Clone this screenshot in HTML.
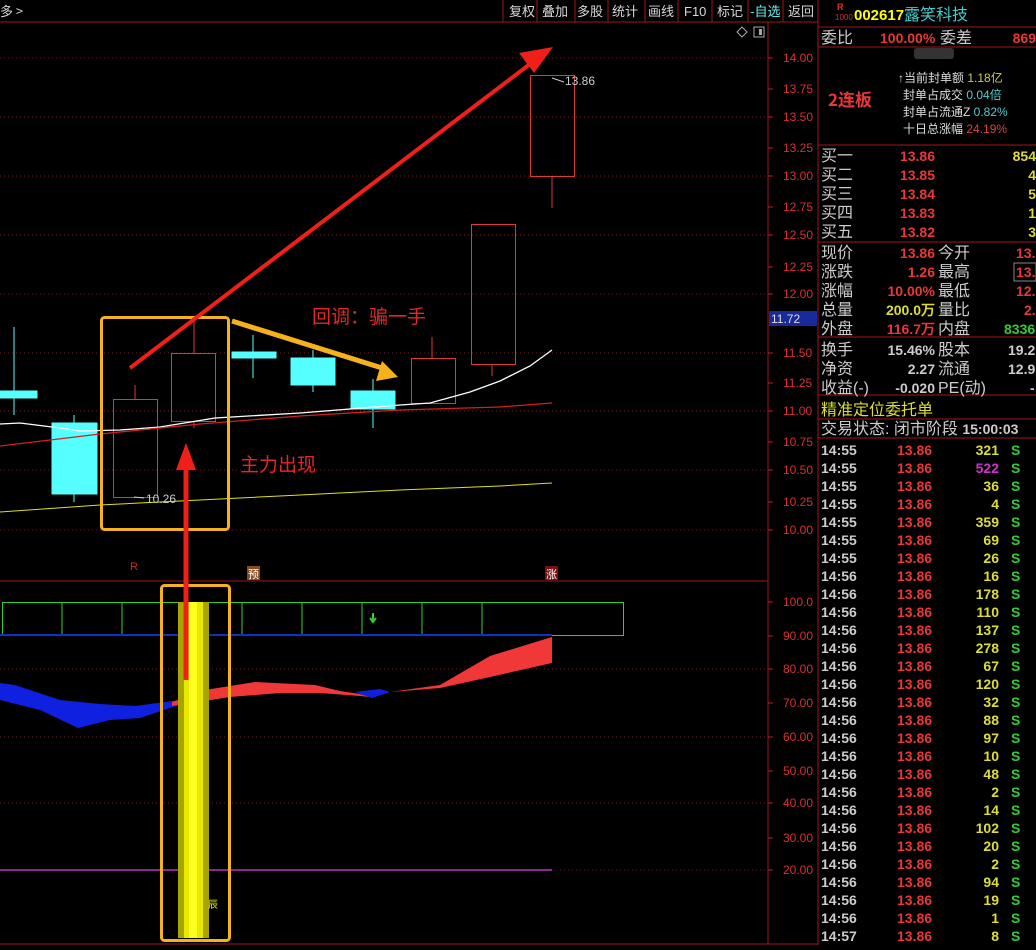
<!DOCTYPE html><html><head><meta charset="utf-8"><style>
body{margin:0;background:#000;width:1036px;height:945px;overflow:hidden}
svg text{font-family:"Liberation Sans","WenQuanYi Zen Hei",sans-serif}
.cn{font-family:"WenQuanYi Zen Hei","Noto Sans CJK SC",sans-serif}
</style></head><body>
<svg width="1036" height="945" viewBox="0 0 1036 945" xmlns="http://www.w3.org/2000/svg">
<rect width="1036" height="945" fill="#000"/>
<g fill="none" stroke="#a01818"><line x1="0" y1="22" x2="818" y2="22"/><line x1="768" y1="22" x2="768" y2="944"/><line x1="818" y1="0" x2="818" y2="945"/><line x1="0" y1="581" x2="768" y2="581"/><line x1="0" y1="944" x2="818" y2="944"/>
<path d="M503 0V22M537 0V22M575 0V22M608 0V22M645 0V22M678 0V22M712 0V22M748 0V22M783 0V22"/></g>
<g font-size="13" fill="#d8d8d8" class="cn"><text x="0" y="16" class="cn">多 &gt;</text>
<text x="509" y="16" class="cn">复权</text><text x="542" y="16" class="cn">叠加</text><text x="577" y="16" class="cn">多股</text><text x="612" y="16" class="cn">统计</text><text x="648" y="16" class="cn">画线</text><text x="684" y="16">F10</text><text x="717" y="16" class="cn">标记</text><text x="750" y="16" class="cn" fill="#6ee">-自选</text><text x="788" y="16" class="cn">返回</text></g>
<path d="M742 27l5 5-5 5-5-5z" fill="none" stroke="#aaa"/><rect x="754" y="27" width="10" height="10" fill="none" stroke="#aaa"/><rect x="759" y="29" width="3" height="6" fill="#aaa"/>
<g stroke="#7a1a1a" stroke-dasharray="1 3"><path d="M0 58H768M0 117H768M0 176H768M0 235H768M0 294H768M0 353H768M0 411H768M0 470H768M0 530H768M0 669H768M0 737H768M0 803H768M560 870H768"/></g>
<g font-size="12" fill="#d83030"><g stroke="#c02020"><path d="M768 58h5M768 89h5M768 117h5M768 148h5M768 176h5M768 207h5M768 235h5M768 267h5M768 294h5M768 353h5M768 383h5M768 411h5M768 442h5M768 470h5M768 502h5M768 530h5M768 602h5M768 636h5M768 669h5M768 703h5M768 737h5M768 771h5M768 803h5M768 838h5M768 870h5"/></g>
<text x="783" y="62">14.00</text><text x="783" y="93">13.75</text><text x="783" y="121">13.50</text><text x="783" y="152">13.25</text><text x="783" y="180">13.00</text><text x="783" y="211">12.75</text><text x="783" y="239">12.50</text><text x="783" y="271">12.25</text><text x="783" y="298">12.00</text><text x="783" y="357">11.50</text><text x="783" y="387">11.25</text><text x="783" y="415">11.00</text><text x="783" y="446">10.75</text><text x="783" y="474">10.50</text><text x="783" y="506">10.25</text><text x="783" y="534">10.00</text>
<text x="783" y="606">100.0</text><text x="783" y="640">90.00</text><text x="783" y="673">80.00</text><text x="783" y="707">70.00</text><text x="783" y="741">60.00</text><text x="783" y="775">50.00</text><text x="783" y="807">40.00</text><text x="783" y="842">30.00</text><text x="783" y="874">20.00</text></g>
<rect x="769" y="311" width="48" height="15" fill="#1a2a9a"/><text x="771" y="323" font-size="12" fill="#ddd">11.72</text>
<g stroke="#5ff" fill="#5ff"><path d="M14 327V415M74 415V502M253 335V378M313 350V392M373 379V428" fill="none"/>
<rect x="0" y="391" width="37" height="7"/><rect x="52" y="423" width="45" height="71"/><rect x="232" y="352" width="44" height="6"/><rect x="291" y="358" width="44" height="27"/><rect x="351" y="391" width="44" height="18"/></g>
<g stroke="#e03838" fill="none"><path d="M135 385V399M194 320V353M194 421V428M432 337V358M492 364V376M552 176V208"/>
<rect x="113.5" y="399.5" width="44" height="98"/><rect x="171.5" y="353.5" width="44" height="68"/><rect x="411.5" y="358.5" width="44" height="45"/><rect x="471.5" y="224.5" width="44" height="140"/><rect x="530.5" y="75.5" width="44" height="101"/></g>
<text x="565" y="85" font-size="12" fill="#ccc">13.86</text><path d="M552 78l12 4" stroke="#ccc"/>
<text x="146" y="503" font-size="12" fill="#ccc">10.26</text><path d="M134 497l10 1" stroke="#ccc"/>
<polyline fill="none" stroke="#fff" stroke-width="1.3" points="0,424 20,423 60,428 80,431 120,430 160,427 215,418 300,413 400,405 430,403 470,392 500,381 530,366 552,350"/>
<polyline fill="none" stroke="#d02020" stroke-width="1.3" points="0,446 100,434 200,424 300,416 400,410 500,407 552,403"/>
<polyline fill="none" stroke="#e0e020" points="0,512 100,505 200,500 300,495 400,490 500,486 552,483"/>
<rect x="101.5" y="317.5" width="127" height="212" rx="3" fill="none" stroke="#f5b21c" stroke-width="3"/>
<line x1="130" y1="368" x2="530" y2="64" stroke="#f02018" stroke-width="4"/><path d="M553 47l-34 6 15 20z" fill="#f02018"/>
<line x1="232" y1="321" x2="382" y2="368" stroke="#f5b21c" stroke-width="5"/><path d="M398 377l-22 4 6-20z" fill="#f5b21c"/>
<text x="312" y="323" font-size="19" fill="#e02828" class="cn">回调：骗一手</text>
<text x="240" y="471" font-size="19" fill="#e02828" class="cn">主力出现</text>
<text x="130" y="570" font-size="11" fill="#e02020">R</text>
<rect x="247" y="566" width="13" height="14" fill="#8a4a20"/><text x="248" y="578" font-size="11" fill="#fff" class="cn">预</text>
<rect x="545" y="566" width="13" height="14" fill="#7a1010"/><text x="546" y="578" font-size="11" fill="#fff" class="cn">涨</text>
<g stroke="#30d030" fill="none"><rect x="2.5" y="602.5" width="621" height="33"/><path d="M62 602V635M122 602V635M242 602V635M302 602V635M362 602V635M422 602V635M482 602V635"/></g>
<path d="M373 613v8m-3-3l3 4 3-4" stroke="#30d030" fill="none" stroke-width="2"/>
<line x1="0" y1="635" x2="552" y2="635" stroke="#1030c0" stroke-width="2"/>
<polygon points="0,683 15,685 60,700 100,704 135,706 180,700 185,703 140,718 110,720 78,728 40,710 0,700" fill="#1020e0"/>
<polygon points="172,702 205,690 255,682 315,685 340,691 360,694 370,697 360,696 320,693 280,693 230,697 172,706" fill="#f03838"/>
<polygon points="355,692 372,698 390,692 380,689" fill="#1020e0"/>
<polygon points="390,692 440,685 490,656 552,637 552,663 490,677 440,688" fill="#f03838"/>
<line x1="0" y1="870" x2="552" y2="870" stroke="#c030c0" stroke-width="1.5"/>
<rect x="178" y="602" width="31" height="336" fill="#a8a400"/><rect x="184" y="602" width="19" height="336" fill="#e8e800"/><rect x="189" y="602" width="8" height="336" fill="#ffff20"/>
<text x="208" y="908" font-size="10" fill="#ee0" class="cn">辰</text>
<rect x="161.5" y="585.5" width="68" height="355" rx="3" fill="none" stroke="#f5b21c" stroke-width="3"/>
<line x1="186" y1="680" x2="186" y2="465" stroke="#f02018" stroke-width="5"/><path d="M186 443l-10 27h20z" fill="#f02018"/>
<g stroke="#a01818"><path d="M818 27H1036M818 47H1036M818 145H1036M818 242H1036M818 337H1036M818 395H1036M818 419H1036M818 438H1036"/></g>
<text x="837" y="10" font-size="9" fill="#e03030" font-weight="bold">R</text><text x="835" y="20" font-size="8" fill="#d03030">1000</text>
<text x="854" y="20" font-size="15" font-weight="bold" fill="#ff0">002617</text><text x="904" y="20" font-size="16" fill="#4cc" class="cn">露笑科技</text>
<g font-size="16" fill="#ccc" class="cn"><text x="821" y="43">委比</text><text x="940" y="43">委差</text>
<text x="821" y="161">买一</text><text x="821" y="180">买二</text><text x="821" y="199">买三</text><text x="821" y="218">买四</text><text x="821" y="237">买五</text>
<text x="821" y="258">现价</text><text x="938" y="258">今开</text><text x="821" y="277">涨跌</text><text x="938" y="277">最高</text><text x="821" y="296">涨幅</text><text x="938" y="296">最低</text><text x="821" y="315">总量</text><text x="938" y="315">量比</text><text x="821" y="334">外盘</text><text x="938" y="334">内盘</text>
<text x="821" y="355">换手</text><text x="938" y="355">股本</text><text x="821" y="374">净资</text><text x="938" y="374">流通</text><text x="821" y="393">收益(-)</text><text x="938" y="393">PE(动)</text>
<text x="821" y="415" fill="#dd3">精准定位委托单</text><text x="821" y="434">交易状态: 闭市阶段 <tspan font-family="Liberation Sans" font-weight="bold" font-size="14">15:00:03</tspan></text></g>
<g font-size="14" font-weight="bold" fill="#e83838"><text x="880" y="43">100.00%</text><text x="1036" y="43" text-anchor="end">869</text>
<text x="935" y="161" text-anchor="end">13.86</text><text x="935" y="180" text-anchor="end">13.85</text><text x="935" y="199" text-anchor="end">13.84</text><text x="935" y="218" text-anchor="end">13.83</text><text x="935" y="237" text-anchor="end">13.82</text>
<g fill="#dd3" text-anchor="end"><text x="1036" y="161">854</text><text x="1036" y="180">4</text><text x="1036" y="199">5</text><text x="1036" y="218">1</text><text x="1036" y="237">3</text></g>
<g text-anchor="end"><text x="935" y="258">13.86</text><text x="935" y="277">1.26</text><text x="935" y="296">10.00%</text><text x="935" y="315" fill="#dd3">200.0万</text><text x="935" y="334">116.7万</text>
<text x="935" y="355" fill="#ccc">15.46%</text><text x="935" y="374" fill="#ccc">2.27</text><text x="935" y="393" fill="#ccc">-0.020</text></g>
<text x="1016" y="258">13.</text><text x="1016" y="277">13.</text><text x="1016" y="296">12.</text><text x="1024" y="315">2.</text><text x="1004" y="334" fill="#3c3">8336</text>
<text x="1008" y="355" fill="#ccc">19.2</text><text x="1008" y="374" fill="#ccc">12.9</text><text x="1030" y="393" fill="#ccc">-</text></g>
<rect x="1014" y="263" width="22" height="18" fill="none" stroke="#888"/>
<text x="828" y="106" font-size="17" font-weight="bold" fill="#e83838" class="cn">2连板</text>
<g font-size="12" class="cn" fill="#ddd"><text x="898" y="82">↑当前封单额 <tspan fill="#cc5">1.18亿</tspan></text><text x="903" y="99">封单占成交 <tspan fill="#5cc">0.04倍</tspan></text><text x="903" y="116">封单占流通Z <tspan fill="#5cc">0.82%</tspan></text><text x="903" y="133">十日总涨幅 <tspan fill="#d44">24.19%</tspan></text></g>
<rect x="914" y="48" width="40" height="11" rx="3" fill="#333"/>
<g font-size="14" font-weight="bold" fill="#ccc">
<text x="821" y="455">14:55</text><text x="821" y="473">14:55</text><text x="821" y="491">14:55</text><text x="821" y="509">14:55</text><text x="821" y="527">14:55</text><text x="821" y="545">14:55</text><text x="821" y="563">14:55</text><text x="821" y="581">14:56</text><text x="821" y="599">14:56</text><text x="821" y="617">14:56</text><text x="821" y="635">14:56</text><text x="821" y="653">14:56</text><text x="821" y="671">14:56</text><text x="821" y="689">14:56</text><text x="821" y="707">14:56</text><text x="821" y="725">14:56</text><text x="821" y="743">14:56</text><text x="821" y="761">14:56</text><text x="821" y="779">14:56</text><text x="821" y="797">14:56</text><text x="821" y="815">14:56</text><text x="821" y="833">14:56</text><text x="821" y="851">14:56</text><text x="821" y="869">14:56</text><text x="821" y="887">14:56</text><text x="821" y="905">14:56</text><text x="821" y="923">14:56</text><text x="821" y="941">14:57</text>
<g fill="#e83838"><text x="897" y="455">13.86</text><text x="897" y="473">13.86</text><text x="897" y="491">13.86</text><text x="897" y="509">13.86</text><text x="897" y="527">13.86</text><text x="897" y="545">13.86</text><text x="897" y="563">13.86</text><text x="897" y="581">13.86</text><text x="897" y="599">13.86</text><text x="897" y="617">13.86</text><text x="897" y="635">13.86</text><text x="897" y="653">13.86</text><text x="897" y="671">13.86</text><text x="897" y="689">13.86</text><text x="897" y="707">13.86</text><text x="897" y="725">13.86</text><text x="897" y="743">13.86</text><text x="897" y="761">13.86</text><text x="897" y="779">13.86</text><text x="897" y="797">13.86</text><text x="897" y="815">13.86</text><text x="897" y="833">13.86</text><text x="897" y="851">13.86</text><text x="897" y="869">13.86</text><text x="897" y="887">13.86</text><text x="897" y="905">13.86</text><text x="897" y="923">13.86</text><text x="897" y="941">13.86</text></g>
<g fill="#dd3" text-anchor="end"><text x="999" y="455">321</text><text x="999" y="473" fill="#c3c">522</text><text x="999" y="491">36</text><text x="999" y="509">4</text><text x="999" y="527">359</text><text x="999" y="545">69</text><text x="999" y="563">26</text><text x="999" y="581">16</text><text x="999" y="599">178</text><text x="999" y="617">110</text><text x="999" y="635">137</text><text x="999" y="653">278</text><text x="999" y="671">67</text><text x="999" y="689">120</text><text x="999" y="707">32</text><text x="999" y="725">88</text><text x="999" y="743">97</text><text x="999" y="761">10</text><text x="999" y="779">48</text><text x="999" y="797">2</text><text x="999" y="815">14</text><text x="999" y="833">102</text><text x="999" y="851">20</text><text x="999" y="869">2</text><text x="999" y="887">94</text><text x="999" y="905">19</text><text x="999" y="923">1</text><text x="999" y="941">8</text></g>
<g fill="#3c3"><text x="1011" y="455">S</text><text x="1011" y="473">S</text><text x="1011" y="491">S</text><text x="1011" y="509">S</text><text x="1011" y="527">S</text><text x="1011" y="545">S</text><text x="1011" y="563">S</text><text x="1011" y="581">S</text><text x="1011" y="599">S</text><text x="1011" y="617">S</text><text x="1011" y="635">S</text><text x="1011" y="653">S</text><text x="1011" y="671">S</text><text x="1011" y="689">S</text><text x="1011" y="707">S</text><text x="1011" y="725">S</text><text x="1011" y="743">S</text><text x="1011" y="761">S</text><text x="1011" y="779">S</text><text x="1011" y="797">S</text><text x="1011" y="815">S</text><text x="1011" y="833">S</text><text x="1011" y="851">S</text><text x="1011" y="869">S</text><text x="1011" y="887">S</text><text x="1011" y="905">S</text><text x="1011" y="923">S</text><text x="1011" y="941">S</text></g>
</g>
</svg>
</body></html>
